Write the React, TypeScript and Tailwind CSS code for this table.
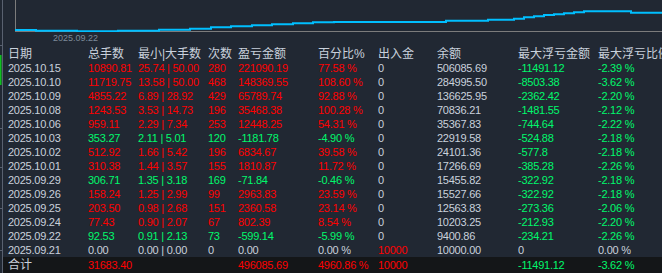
import React from "react";

type Tone = "r" | "g" | "w";

type Row = {
    date: string;
    lots: [string, Tone];
    minMax: [string, string, Tone];
    count: [string, Tone];
    pnl: [string, Tone];
    pct: [string, Tone];
    flow: [string, Tone];
    balance: string;
    ddAmt: [string, Tone];
    ddPct: [string, Tone];
};

const toneClass: Record<Tone, string> = {
    r: "text-[#ff0000]",
    g: "text-[#00f86c]",
    w: "text-[#c9d1dc]",
};

const rows: Row[] = [
    { date: "2025.10.15", lots: ["10890.81", "r"], minMax: ["25.74", "50.00", "r"], count: ["280", "r"], pnl: ["221090.19", "r"], pct: ["77.58 %", "r"], flow: ["0", "w"], balance: "506085.69", ddAmt: ["-11491.12", "g"], ddPct: ["-2.39 %", "g"] },
    { date: "2025.10.10", lots: ["11719.75", "r"], minMax: ["13.58", "50.00", "r"], count: ["468", "r"], pnl: ["148369.55", "r"], pct: ["108.60 %", "r"], flow: ["0", "w"], balance: "284995.50", ddAmt: ["-8503.38", "g"], ddPct: ["-3.62 %", "g"] },
    { date: "2025.10.09", lots: ["4855.22", "r"], minMax: ["6.89", "28.92", "r"], count: ["429", "r"], pnl: ["65789.74", "r"], pct: ["92.88 %", "r"], flow: ["0", "w"], balance: "136625.95", ddAmt: ["-2362.42", "g"], ddPct: ["-2.20 %", "g"] },
    { date: "2025.10.08", lots: ["1243.53", "r"], minMax: ["3.53", "14.73", "r"], count: ["196", "r"], pnl: ["35468.38", "r"], pct: ["100.28 %", "r"], flow: ["0", "w"], balance: "70836.21", ddAmt: ["-1481.55", "g"], ddPct: ["-2.12 %", "g"] },
    { date: "2025.10.06", lots: ["959.11", "r"], minMax: ["2.29", "7.34", "r"], count: ["253", "r"], pnl: ["12448.25", "r"], pct: ["54.31 %", "r"], flow: ["0", "w"], balance: "35367.83", ddAmt: ["-744.64", "g"], ddPct: ["-2.22 %", "g"] },
    { date: "2025.10.03", lots: ["353.27", "g"], minMax: ["2.11", "5.01", "g"], count: ["120", "g"], pnl: ["-1181.78", "g"], pct: ["-4.90 %", "g"], flow: ["0", "w"], balance: "22919.58", ddAmt: ["-524.88", "g"], ddPct: ["-2.18 %", "g"] },
    { date: "2025.10.02", lots: ["512.92", "r"], minMax: ["1.66", "5.42", "r"], count: ["196", "r"], pnl: ["6834.67", "r"], pct: ["39.58 %", "r"], flow: ["0", "w"], balance: "24101.36", ddAmt: ["-577.8", "g"], ddPct: ["-2.18 %", "g"] },
    { date: "2025.10.01", lots: ["310.38", "r"], minMax: ["1.44", "3.57", "r"], count: ["155", "r"], pnl: ["1810.87", "r"], pct: ["11.72 %", "r"], flow: ["0", "w"], balance: "17266.69", ddAmt: ["-385.28", "g"], ddPct: ["-2.26 %", "g"] },
    { date: "2025.09.29", lots: ["306.71", "g"], minMax: ["1.35", "3.18", "g"], count: ["169", "g"], pnl: ["-71.84", "g"], pct: ["-0.46 %", "g"], flow: ["0", "w"], balance: "15455.82", ddAmt: ["-322.92", "g"], ddPct: ["-2.18 %", "g"] },
    { date: "2025.09.26", lots: ["158.24", "r"], minMax: ["1.25", "2.99", "r"], count: ["99", "r"], pnl: ["2963.83", "r"], pct: ["23.59 %", "r"], flow: ["0", "w"], balance: "15527.66", ddAmt: ["-322.92", "g"], ddPct: ["-2.18 %", "g"] },
    { date: "2025.09.25", lots: ["203.50", "r"], minMax: ["0.98", "2.68", "r"], count: ["151", "r"], pnl: ["2360.58", "r"], pct: ["23.14 %", "r"], flow: ["0", "w"], balance: "12563.83", ddAmt: ["-273.36", "g"], ddPct: ["-2.06 %", "g"] },
    { date: "2025.09.24", lots: ["77.43", "r"], minMax: ["0.90", "2.07", "r"], count: ["67", "r"], pnl: ["802.39", "r"], pct: ["8.54 %", "r"], flow: ["0", "w"], balance: "10203.25", ddAmt: ["-212.93", "g"], ddPct: ["-2.20 %", "g"] },
    { date: "2025.09.22", lots: ["92.53", "g"], minMax: ["0.91", "2.13", "g"], count: ["73", "g"], pnl: ["-599.14", "g"], pct: ["-5.99 %", "g"], flow: ["0", "w"], balance: "9400.86", ddAmt: ["-234.21", "g"], ddPct: ["-2.26 %", "g"] },
    { date: "2025.09.21", lots: ["0.00", "w"], minMax: ["0.00", "0.00", "w"], count: ["0", "w"], pnl: ["0.00", "w"], pct: ["0.00 %", "w"], flow: ["10000", "r"], balance: "10000.00", ddAmt: ["0", "w"], ddPct: ["0.00 %", "w"] },
];

// equity curve steps, page x / y
const steps: Array<[number, number, number]> = [
    [15, 36, 30], [36, 77, 30.7], [77, 118, 31.3], [118, 159, 30.7], [159, 190, 29.7],
    [190, 211, 28.7], [211, 231, 27.3], [231, 252, 26.3], [252, 272, 25.3], [272, 293, 24.3],
    [293, 313, 23.3], [313, 334, 22.3], [334, 446, 22], [446, 488, 20.7], [488, 514, 19.7],
    [514, 524, 18.7], [524, 534, 17.3], [534, 544, 16.3], [544, 554, 15], [554, 564, 14.3],
    [564, 574, 13.3], [574, 584, 12.3], [584, 631, 11.3], [631, 662, 12.7],
];

const curvePath = steps
    .map(([x0, x1, y], i) => (i === 0 ? `M${x0 - 3} ${y}` : `V${y}`) + ` H${x1 - 3}`)
    .join(" ");

const grid =
    "grid grid-cols-[80px_50px_70px_30px_80px_60px_59px_81px_80px_80px] pl-[5px] whitespace-nowrap";

const Cell = ({ v, tone }: { v: string; tone: Tone }) => (
    <div className={toneClass[tone]}>{v}</div>
);

export default function App() {
    const headers = ["日期", "总手数", "最小|大手数", "次数", "盈亏金额", "百分比%", "出入金", "余额", "最大浮亏金额", "最大浮亏比例"];
    return (
        <div className="flex h-[273px] w-[662px] overflow-hidden bg-[#212833] font-['Liberation_Sans','Noto_Sans_CJK_SC',sans-serif] text-[#c9d1dc]">
            <svg width="3" height="273" className="shrink-0">
                <line x1="2.5" y1="0" x2="2.5" y2="273" stroke="#596170" />
                {[45, 128, 167, 208, 250].map((y) => (
                    <line key={y} x1="0" y1={y + 0.5} x2="2" y2={y + 0.5} stroke="#596170" />
                ))}
                <rect x="0" y="55" width="1.5" height="30" fill="#10c020" />
            </svg>

            <div className="flex min-w-0 flex-1 flex-col">
                <svg width="659" height="32" className="shrink-0">
                    <line x1="12.5" y1="0" x2="12.5" y2="31.5" stroke="#7c7c7c" />
                    <line x1="12" y1="31.5" x2="659" y2="31.5" stroke="#7c7c7c" />
                    <path d={curvePath} fill="none" stroke="#00bfff" strokeWidth="2" />
                </svg>
                <div className="h-[16px] pl-[50px] text-[9px] leading-[12px] text-[#7d8a99]">2025.09.22</div>

                <div className={`${grid} h-[14px] text-[12px] leading-[14px]`}>
                    {headers.map((h) => (
                        <div key={h}>{h}</div>
                    ))}
                </div>

                {rows.map((r) => (
                    <div key={r.date} className={`${grid} h-[14px] text-[11px] leading-[14px] tracking-[-0.25px]`}>
                        <div>{r.date}</div>
                        <Cell v={r.lots[0]} tone={r.lots[1]} />
                        <Cell v={`${r.minMax[0]} | ${r.minMax[1]}`} tone={r.minMax[2]} />
                        <Cell v={r.count[0]} tone={r.count[1]} />
                        <Cell v={r.pnl[0]} tone={r.pnl[1]} />
                        <Cell v={r.pct[0]} tone={r.pct[1]} />
                        <Cell v={r.flow[0]} tone={r.flow[1]} />
                        <div>{r.balance}</div>
                        <Cell v={r.ddAmt[0]} tone={r.ddAmt[1]} />
                        <Cell v={r.ddPct[0]} tone={r.ddPct[1]} />
                    </div>
                ))}

                <div className={`${grid} h-[16px] bg-[#141618] text-[11px] leading-[16px] tracking-[-0.25px]`}>
                    <div className="text-[12px] tracking-normal">合计</div>
                    <Cell v="31683.40" tone="r" />
                    <div />
                    <div />
                    <Cell v="496085.69" tone="r" />
                    <Cell v="4960.86 %" tone="r" />
                    <Cell v="10000" tone="r" />
                    <div />
                    <Cell v="-11491.12" tone="g" />
                    <Cell v="-3.62 %" tone="g" />
                </div>
            </div>
        </div>
    );
}
